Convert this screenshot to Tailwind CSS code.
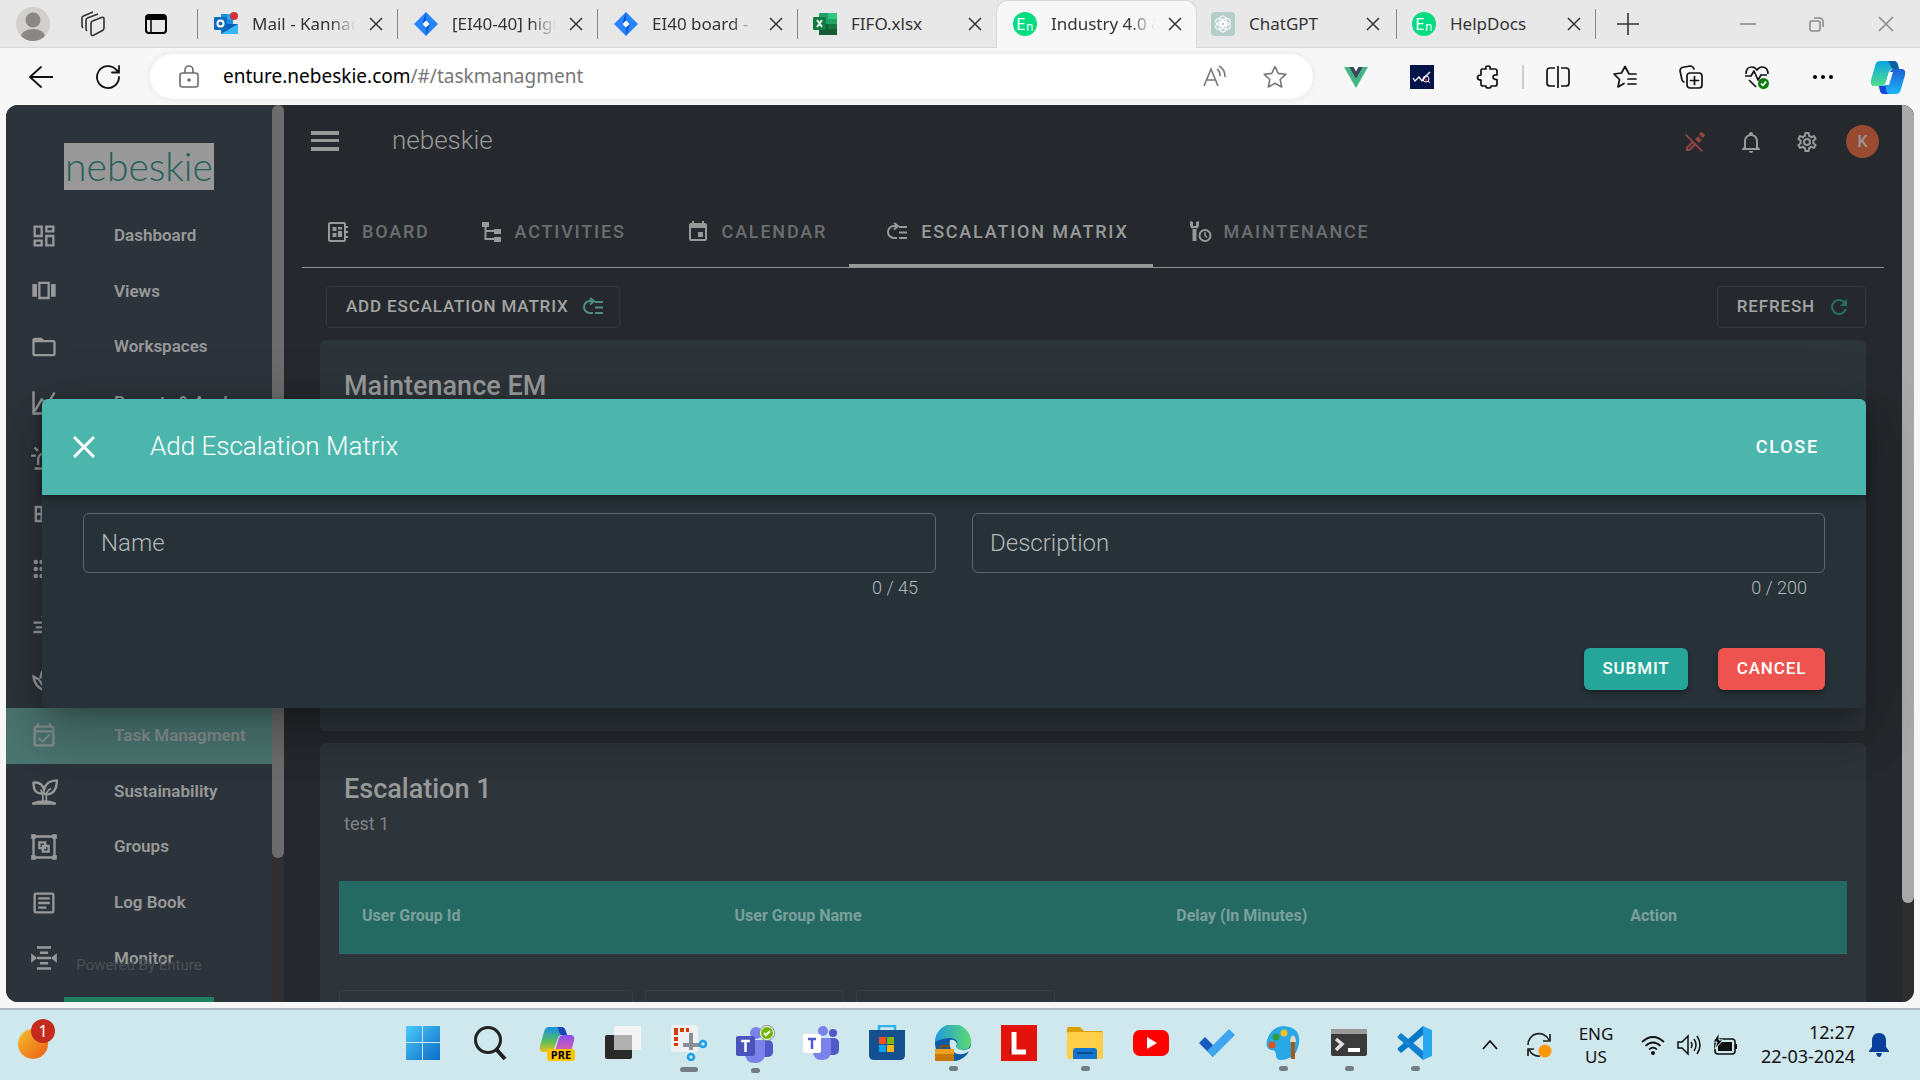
<!DOCTYPE html>
<html lang="en">
<head>
  <meta charset="UTF-8">
  <title>Industry 4.0 - Task Managment</title>
  <script src="https://cdn.jsdelivr.net/npm/@tailwindcss/browser@4"></script>
</head>
<body class="h-screen flex flex-col overflow-hidden bg-[#f7f7f7] font-['Noto_Sans',sans-serif] text-[#333]">

  <!-- Browser tabs -->
  <div class="h-12 shrink-0 flex items-center bg-[#e8e8e8] border-b border-[#d8d8d8] text-[17px]">
    <button class="w-[66px] flex justify-center" aria-label="Profile">
      <svg class="size-[34px]" viewBox="0 0 34 34"><defs><clipPath id="av"><circle cx="17" cy="17" r="17"/></clipPath></defs><circle cx="17" cy="17" r="17" fill="#d2d0cd"/><g clip-path="url(#av)" fill="#8a8785"><circle cx="17" cy="13" r="7.5"/><ellipse cx="17" cy="30" rx="12" ry="8"/></g></svg>
    </button>
    <button class="w-[54px] flex justify-center" aria-label="Workspaces">
      <svg class="size-[26px]" viewBox="0 0 26 26" fill="none" stroke="#333" stroke-width="1.6" stroke-linejoin="round"><path d="M12.500 10l9-3.500q2.500-.8 2.500 1.500v9q0 1.500-1.500 2.500l-8.500 4.500q-3 1.500-3-1.500V12q0-1.500 1.500-2zM7 20q-1-1-1-2V9q0-1.500 1.500-2L18 3M3 17q-1-1-1-2V7q0-1.500 1.500-2L13 1"/></svg>
    </button>
    <button class="w-[77px] pr-1.5 flex justify-center" aria-label="Tab actions">
      <svg class="size-6" viewBox="0 0 24 24" fill="none" stroke="#000" stroke-width="2"><rect x="2" y="3" width="20" height="18" rx="3"/><path d="M2 5.500h20" stroke-width="5"/><path d="M7 8v13" stroke-width="1.500"/></svg>
    </button>

    <div class="flex h-12 items-center">
      <div class="w-[200px] h-[30px] pl-4 flex items-center border-l border-[#888]">
        <svg class="size-6 shrink-0" viewBox="0 0 24 24"><path d="M7 2h12v20H7z" fill="#1490df"/><path d="M13 2h6v6h-6z" fill="#28a8ea"/><path d="M7 12h17v10H8z" fill="#0a5fb4"/><path d="M24 12v10H7z" fill="#35b8f1"/><rect y="5" width="13" height="13" rx="1" fill="#0f6cbd"/><circle cx="6.500" cy="11.500" r="3" fill="none" stroke="#fff" stroke-width="2"/><circle cx="20" cy="4" r="4" fill="#d13438"/></svg>
        <span class="ml-3.5 w-[104px] overflow-hidden whitespace-nowrap mask-r-from-75%">Mail - Kannadasan</span>
        <button class="ml-3" aria-label="Close tab"><svg class="size-4" viewBox="0 0 16 16" stroke="#333" stroke-width="1.500"><path d="M2 2l12 12M14 2L2 14"/></svg></button>
      </div>
      <div class="w-[200px] h-[30px] pl-4 flex items-center border-l border-[#888]">
        <svg class="size-6 shrink-0" viewBox="0 0 24 24"><path d="M12 0l12 12-12 12L0 12z" fill="#2684ff"/><path d="M12 0v9L8 13zM12 24v-9l4-4z" fill="#0a52cc"/><path d="M12 8.500l3.500 3.500-3.500 3.500L8.500 12z" fill="#fff"/></svg>
        <span class="ml-3.5 w-[104px] overflow-hidden whitespace-nowrap mask-r-from-75%">[EI40-40] highlight</span>
        <button class="ml-3" aria-label="Close tab"><svg class="size-4" viewBox="0 0 16 16" stroke="#333" stroke-width="1.500"><path d="M2 2l12 12M14 2L2 14"/></svg></button>
      </div>
      <div class="w-[200px] h-[30px] pl-4 flex items-center border-l border-[#888]">
        <svg class="size-6 shrink-0" viewBox="0 0 24 24"><path d="M12 0l12 12-12 12L0 12z" fill="#2684ff"/><path d="M12 0v9L8 13zM12 24v-9l4-4z" fill="#0a52cc"/><path d="M12 8.500l3.500 3.500-3.500 3.500L8.500 12z" fill="#fff"/></svg>
        <span class="ml-3.5 w-[104px] overflow-hidden whitespace-nowrap mask-r-from-75%">EI40 board - </span>
        <button class="ml-3" aria-label="Close tab"><svg class="size-4" viewBox="0 0 16 16" stroke="#333" stroke-width="1.500"><path d="M2 2l12 12M14 2L2 14"/></svg></button>
      </div>
      <div class="w-[199px] h-[30px] pl-[15px] flex items-center border-l border-[#888]">
        <svg class="size-6 shrink-0" viewBox="0 0 24 24"><rect x="6" y="1" width="18" height="22" rx="1" fill="#21a366"/><path d="M15 1h9v6h-9z" fill="#33c481"/><path d="M6 12h9v6H6z" fill="#185c37"/><path d="M15 12h9v5h-9z" fill="#107c41"/><path d="M6 17h18v6H6z" fill="#185c37"/><rect y="5" width="13" height="13" rx="1" fill="#107c41"/><path d="M4 8l5 7M9 8l-5 7" stroke="#fff" stroke-width="1.800"/></svg>
        <span class="ml-3.5 w-[104px] overflow-hidden whitespace-nowrap">FIFO.xlsx</span>
        <button class="ml-3" aria-label="Close tab"><svg class="size-4" viewBox="0 0 16 16" stroke="#333" stroke-width="1.500"><path d="M2 2l12 12M14 2L2 14"/></svg></button>
      </div>
      <div class="w-[201px] h-12 pl-4 flex items-center rounded-t-xl bg-[#f7f7f7] border-x border-t border-[#d8d8d8]">
        <svg class="size-6 shrink-0" viewBox="0 0 24 24"><circle cx="12" cy="12" r="12" fill="#00dc82"/><text x="3" y="18" font-size="17" fill="#fff" font-family="Noto Sans">E</text><text x="13" y="19" font-size="12" fill="#fff" font-family="Noto Sans">n</text></svg>
        <span class="ml-3.5 w-[104px] overflow-hidden whitespace-nowrap mask-r-from-75%">Industry 4.0 &amp; IoT</span>
        <button class="ml-3" aria-label="Close tab"><svg class="size-4" viewBox="0 0 16 16" stroke="#333" stroke-width="1.500"><path d="M2 2l12 12M14 2L2 14"/></svg></button>
      </div>
      <div class="w-[199px] h-[30px] pl-[14px] flex items-center">
        <svg class="size-6 shrink-0" viewBox="0 0 24 24"><rect width="24" height="24" rx="4" fill="#b4cfc8"/><g fill="none" stroke="#fff" stroke-width="1.200"><ellipse cx="12" cy="9" rx="3.500" ry="5"/><ellipse cx="12" cy="9" rx="3.500" ry="5" transform="rotate(60 12 12)"/><ellipse cx="12" cy="9" rx="3.500" ry="5" transform="rotate(120 12 12)"/><ellipse cx="12" cy="9" rx="3.500" ry="5" transform="rotate(180 12 12)"/><ellipse cx="12" cy="9" rx="3.500" ry="5" transform="rotate(240 12 12)"/><ellipse cx="12" cy="9" rx="3.500" ry="5" transform="rotate(300 12 12)"/></g></svg>
        <span class="ml-3.5 w-[104px] overflow-hidden whitespace-nowrap">ChatGPT</span>
        <button class="ml-3" aria-label="Close tab"><svg class="size-4" viewBox="0 0 16 16" stroke="#333" stroke-width="1.500"><path d="M2 2l12 12M14 2L2 14"/></svg></button>
      </div>
      <div class="w-[200px] h-[30px] pl-[15px] flex items-center border-x border-[#888]">
        <svg class="size-6 shrink-0" viewBox="0 0 24 24"><circle cx="12" cy="12" r="12" fill="#00dc82"/><text x="3" y="18" font-size="17" fill="#fff" font-family="Noto Sans">E</text><text x="13" y="19" font-size="12" fill="#fff" font-family="Noto Sans">n</text></svg>
        <span class="ml-3.5 w-[104px] overflow-hidden whitespace-nowrap">HelpDocs</span>
        <button class="ml-3" aria-label="Close tab"><svg class="size-4" viewBox="0 0 16 16" stroke="#333" stroke-width="1.500"><path d="M2 2l12 12M14 2L2 14"/></svg></button>
      </div>
    </div>
    <button class="ml-[21px]" aria-label="New tab"><svg class="size-[22px]" viewBox="0 0 22 22" stroke="#333" stroke-width="1.600"><path d="M11 0v22M0 11h22"/></svg></button>
    <div class="ml-auto mr-[26px] flex items-center gap-[53px]">
      <button aria-label="Minimise"><svg class="size-4" viewBox="0 0 16 16" stroke="#8a8a8a" stroke-width="1.600"><path d="M0 8h16"/></svg></button>
      <button aria-label="Restore"><svg class="size-4" viewBox="0 0 16 16" fill="none" stroke="#8a8a8a" stroke-width="1.600"><rect x="1" y="5" width="10" height="10" rx="2"/><path d="M5 2h5q4 0 4 4v5"/></svg></button>
      <button aria-label="Close window"><svg class="size-4" viewBox="0 0 16 16" stroke="#8a8a8a" stroke-width="1.600"><path d="M1 1l14 14M15 1L1 15"/></svg></button>
    </div>
  </div>

  <!-- Address bar -->
  <div class="h-[57px] shrink-0 flex items-center">
    <button class="ml-2 w-[66px] flex justify-center" aria-label="Back"><svg class="size-6" viewBox="0 0 24 24" fill="none" stroke="#111" stroke-width="1.800" stroke-linecap="round" stroke-linejoin="round"><path d="M24 12H1M12 2L1 12l11 10"/></svg></button>
    <button class="w-[67px] flex justify-center" aria-label="Reload"><svg class="size-[26px]" viewBox="0 0 26 26" fill="none" stroke="#111" stroke-width="1.800" stroke-linecap="round"><path d="M24 13A11 11 0 1 1 21 5.500l2.500 2.500M24 2v6.500h-7"/></svg></button>
    <div class="ml-[9px] mr-2.5 h-[45px] flex-1 flex items-center rounded-full bg-white shadow-[0_0_6px_rgba(0,0,0,0.08)]">
      <svg class="ml-[29px] h-6 w-5 shrink-0" viewBox="0 0 20 24" fill="none" stroke="#6b6b6b" stroke-width="1.600"><rect x="1" y="8" width="18" height="14" rx="2.500"/><path d="M6 8V5a4 4 0 0 1 8 0v3"/><circle cx="10" cy="15" r="1" fill="#6b6b6b"/></svg>
      <a href="#" class="ml-6 text-[19px] text-[#777]"><span class="text-black">enture.nebeskie.com</span>/#/taskmanagment</a>
      <svg class="ml-auto size-6" viewBox="0 0 24 24" fill="none" stroke="#777" stroke-width="1.600"><path d="M1 21L8 4l7 17M3.500 15h9M14 4q3 2 3 7M16 1q6 3 6 11"/></svg>
      <svg class="ml-9 mr-[26px] size-6" viewBox="0 0 24 24" fill="none" stroke="#777" stroke-width="1.600" stroke-linejoin="round"><path d="M12 1.500l3.200 6.900 7.600.9-5.600 5.200 1.500 7.500L12 18.300 5.300 22l1.500-7.500L1.200 9.300l7.600-.9z"/></svg>
    </div>
    <button class="w-[66px] flex justify-center" aria-label="Vue devtools"><svg class="size-6" viewBox="0 0 24 24"><path d="M0 2h5l7 12 7-12h5L12 23z" fill="#41b883"/><path d="M5 2h4.500L12 6.500 14.500 2H19l-7 12z" fill="#34495e"/></svg></button>
    <button class="w-[66px] flex justify-center" aria-label="Analytics extension"><svg class="size-6" viewBox="0 0 24 24"><path d="M0 0h24v24H0z" fill="#04134a"/><path d="M3 13l2 3 4-4 3 4 4-5 4-4" fill="none" stroke="#fff" stroke-width="1.300"/><circle cx="16" cy="14" r="3" fill="none" stroke="#fff"/><path d="M18 16l2 2" stroke="#fff"/><circle cx="16" cy="15" r="1" fill="#e33"/></svg></button>
    <button class="w-[66px] flex justify-center" aria-label="Extensions"><svg class="size-6" viewBox="0 0 24 24" fill="none" stroke="#111" stroke-width="1.700" stroke-linejoin="round"><path d="M6 4h4q-1-3 2-3t2 3h5q2 0 2 2v4q-4-.5-4 2t4 2.500V19q0 2-2 2h-4q.5 2-2.500 2T10 21H7q-2 0-2-2v-4q-3.500 0-3.500-2.500T5 10V6q0-2 1-2z"/></svg></button>
    <span class="mx-px h-6 w-0.5 bg-[#ccc]"></span>
    <button class="w-[66px] flex justify-center" aria-label="Split screen"><svg class="size-6" viewBox="0 0 24 24" fill="none" stroke="#111" stroke-width="1.700"><path d="M12 1v22M9 3H4Q1 3 1 6v12q0 3 3 3h5M15 3h5q3 0 3 3v12q0 3-3 3h-5"/></svg></button>
    <button class="w-[67px] flex justify-center" aria-label="Favorites"><svg class="size-6" viewBox="0 0 24 24" fill="none" stroke="#111" stroke-width="1.700" stroke-linejoin="round" stroke-linecap="round"><path d="M22 9h-6L12 1.500 8.500 8 1 9l5.500 5.500L5 22l6-3.500M15 14h8M15 19h8M19 9h4"/></svg></button>
    <button class="w-[66px] flex justify-center" aria-label="Collections"><svg class="size-6" viewBox="0 0 24 24" fill="none" stroke="#111" stroke-width="1.700" stroke-linecap="round"><rect x="8" y="8" width="15" height="15" rx="3"/><path d="M15.500 11.500v8M11.500 15.500h8M5 17q-1.500-.5-2-2L1 6q0-2.500 2-3.500l8-1.500q3 0 4 3"/></svg></button>
    <button class="w-[66px] flex justify-center" aria-label="Browser essentials"><svg class="size-6" viewBox="0 0 24 24" fill="none" stroke="#111" stroke-width="1.700" stroke-linejoin="round"><path d="M1 9Q1 2 7 2q3 0 5 3 2-3 5-3 6 0 6 7M0 11h6l3-5 4 9 3-5h6M4 15l7 7"/><circle cx="18.500" cy="18.500" r="5.500" fill="#107c10" stroke="none"/><path d="M16 18.500l2 2 3-4" stroke="#fff"/></svg></button>
    <button class="w-[66px] flex justify-center" aria-label="Settings and more"><svg class="size-5" viewBox="0 0 20 20"><circle cx="2" cy="10" r="2"/><circle cx="10" cy="10" r="2"/><circle cx="18" cy="10" r="2"/></svg></button>
    <button class="w-16 flex justify-center" aria-label="Copilot">
      <svg class="size-9" viewBox="0 0 36 36"><defs><linearGradient id="cpa" x1="0" y1="0" x2="0" y2="1"><stop offset="0" stop-color="#0aa4e8"/><stop offset="1" stop-color="#4fe08a"/></linearGradient><linearGradient id="cpb" x1="0" y1="0" x2="0" y2="1"><stop offset="0" stop-color="#1f5fd0"/><stop offset="1" stop-color="#1ab8f8"/></linearGradient></defs><path d="M10 2h14q3 0 4 4l1 4h-6q-3 0-4 3l-3 10q-1 4-5 4H4q-4 0-3-6l4-14q1-5 5-5z" fill="url(#cpa)"/><path d="M17 2h7q3 0 4 4l1 4h-6q-2-1-3-4-1-4-3-4z" fill="#0b62a0"/><path d="M26 35H14q-3 0-4-3l-1-5h3q4 0 5-4l3-10q1-3 4-3h8q4 0 3 6l-4 14q-1 5-5 5z" fill="url(#cpb)"/><path d="M9 27h4q3-1 3 3t3 5h-5q-3 0-4-3z" fill="#1546d8"/><path d="M19 13h4l-4 13h-4z" fill="#f4faff"/></svg>
    </button>
  </div>

  <!-- App -->
  <div class="relative mx-1.5 mb-1.5 flex-1 min-h-0 flex overflow-hidden rounded-xl bg-[#25292d] font-[Roboto,sans-serif] text-[#989999]">

    <!-- Sidebar -->
    <aside class="relative w-[266px] shrink-0 flex flex-col bg-[#2c333a]">
      <div class="mt-[38px] mx-[58px] h-[47px] flex items-center justify-center bg-[#999] font-[Lato,sans-serif] font-light text-[39px] leading-none text-[#265f59]">nebeskie</div>
      <nav class="mt-[18px] mb-4 flex-1 min-h-0 flex flex-col text-[17px] font-semibold">
        <a href="#" class="flex-1 flex items-center pl-6"><svg class="size-7 fill-current" viewBox="0 0 24 24"><path d="M19,5V7H15V5H19M9,5V11H5V5H9M19,13V19H15V13H19M9,17V19H5V17H9M21,3H13V9H21V3M11,3H3V13H11V3M21,11H13V21H21V11M11,15H3V21H11V15Z"/></svg><span class="ml-14">Dashboard</span></a>
        <a href="#" class="flex-1 flex items-center pl-6"><svg class="size-7 fill-current" viewBox="0 0 24 24"><path fill-rule="evenodd" d="M18 6h4v11h-4zM2 6h4v11H2zM7 4h10v15H7zM9 6v11h6V6z"/></svg><span class="ml-14">Views</span></a>
        <a href="#" class="flex-1 flex items-center pl-6"><svg class="size-7 fill-current" viewBox="0 0 24 24"><path d="M20,18H4V8H20M20,6H12L10,4H4C2.890,4 2,4.890 2,6V18A2,2 0 0,0 4,20H20A2,2 0 0,0 22,18V8C22,6.890 21.100,6 20,6Z"/></svg><span class="ml-14">Workspaces</span></a>
        <a href="#" class="flex-1 flex items-center pl-6"><svg class="size-7" viewBox="0 0 24 24" fill="none" stroke="currentColor" stroke-width="2"><path d="M3 2v19h19M4 19L10 9l5 4 6-10"/></svg><span class="ml-14">Reports &amp; Anal...</span></a>
        <a href="#" class="flex-1 flex items-center pl-6"><svg class="size-7" viewBox="0 0 24 24" fill="none" stroke="currentColor" stroke-width="2"><path d="M7 18v-5a5 5 0 0 1 10 0v5M4 21h16M1 10h4M4 3l3 3M12 2v3M20 3l-3 3"/></svg></a>
        <a href="#" class="flex-1 flex items-center pl-6"><svg class="size-7" viewBox="0 0 24 24" fill="none" stroke="currentColor" stroke-width="2"><path d="M5 6h15v12H5zM5 12h15M10 6v12"/></svg></a>
        <a href="#" class="flex-1 flex items-center pl-6"><svg class="size-7 fill-current" viewBox="0 0 24 24"><circle cx="5" cy="6" r="2"/><circle cx="5" cy="12" r="2"/><circle cx="5" cy="18" r="2"/><circle cx="10" cy="6" r="2"/><circle cx="10" cy="12" r="2"/><circle cx="10" cy="18" r="2"/></svg></a>
        <a href="#" class="flex-1 flex items-center pl-6"><svg class="size-7" viewBox="0 0 24 24" fill="none" stroke="currentColor" stroke-width="2"><path d="M3 10h14M5 14h16M3 18h18M10 5h8"/></svg></a>
        <a href="#" class="flex-1 flex items-center pl-6"><svg class="size-7" viewBox="0 0 24 24" fill="none" stroke="currentColor" stroke-width="2"><path d="M3 9c1 7 4 10 9 12-1-7-4-10-9-12zM21 9c-1 7-4 10-9 12 1-7 4-10 9-12zM9 11q0-5 3-8 3 3 3 8"/></svg></a>
        <a href="#" class="flex-1 flex items-center pl-6 bg-[#4b7570] text-[#85908e]"><svg class="size-7 fill-current" viewBox="0 0 24 24"><path d="M19 3H18V1H16V3H8V1H6V3H5C3.900 3 3 3.900 3 5V19C3 20.100 3.900 21 5 21H19C20.100 21 21 20.100 21 19V5C21 3.900 20.100 3 19 3M19 19H5V9H19V19M19 7H5V5H19V7M10.560 18L17.500 11.090L16.430 10.030L10.560 15.900L7.970 13.310L6.910 14.370L10.560 18Z"/></svg><span class="ml-14">Task Managment</span></a>
        <a href="#" class="flex-1 flex items-center pl-6"><svg class="size-7" viewBox="0 0 24 24" fill="none" stroke="currentColor" stroke-width="2"><path d="M2 22q10-4 20 0z" fill="currentColor"/><path d="M11 20v-5q0-3-2-5M14 20v-5q0-4 4-6" stroke-width="1.500"/><path d="M3 4q7-1 9 6Q14 2 23 2q0 12-9 12-1 0-2-1Q3 15 3 4z"/></svg><span class="ml-14">Sustainability</span></a>
        <a href="#" class="flex-1 flex items-center pl-6"><svg class="size-7" viewBox="0 0 24 24" fill="none" stroke="currentColor" stroke-width="2"><path d="M3 3h18v18H3zM8 8h5v5H8zM11 11h5v5h-5z"/><path d="M1 1h4v4H1zM19 1h4v4h-4zM1 19h4v4H1zM19 19h4v4h-4z" fill="currentColor" stroke="none"/></svg><span class="ml-14">Groups</span></a>
        <a href="#" class="flex-1 flex items-center pl-6"><svg class="size-7" viewBox="0 0 24 24" fill="none" stroke="currentColor" stroke-width="2"><rect x="4" y="4" width="16" height="16" rx="1"/><path d="M7 8h10M7 12h10M7 16h7"/></svg><span class="ml-14">Log Book</span></a>
        <a href="#" class="flex-1 flex items-center pl-6"><svg class="size-7" viewBox="0 0 24 24" fill="none" stroke="currentColor" stroke-width="2"><path d="M6 3h12M8.500 7.500h7M6 12h12M8.500 16.500h7M6 21h12"/><path d="M1 8l5 4-5 4zM23 8l-5 4 5 4z" fill="currentColor" stroke="none"/></svg><span class="ml-14">Monitor</span></a>
      </nav>
      <div class="absolute bottom-0 left-[58px] w-[150px] pointer-events-none">
        <p class="mb-[21px] text-center text-[15px] leading-[22px] text-[#4b5054]">Powered By Enture</p>
        <div class="h-[5px] bg-[#20805f]"></div>
      </div>
    </aside>
    <div class="w-3 shrink-0 bg-[#302e2e]"><div class="h-[84%] rounded-full bg-[#6c6c6c]"></div></div>

    <!-- Main -->
    <main class="flex-1 min-w-0 flex flex-col">
      <header class="h-[75px] shrink-0 flex items-center pl-[27px] pr-[23px]">
        <button class="mb-1" aria-label="Menu"><svg class="w-7 h-5" viewBox="0 0 28 20" fill="#989999"><path d="M0 0h28v4H0zM0 8h28v3H0zM0 16h28v4H0z"/></svg></button>
        <h1 class="ml-[53px] mb-1 text-[26px] font-light">nebeskie</h1>
        <div class="ml-auto mb-0.5 flex items-center">
          <svg class="size-6 fill-[#8e4544]" viewBox="0 0 24 24"><path d="M18.660 2q-.360 0-.720.290l-2.030 2.030 3.750 3.750 2.050-2.030q.600-.700 0-1.410l-2.340-2.340Q19 2 18.660 2M3.280 4L2 5.280l6.500 6.470L3 17.250V21h3.750l5.500-5.500L18.720 22 20 20.720zM15.060 6.190l-3 3 3.750 3.750 3-3zM9.910 13.160l.930.930L5.920 19H5v-.920z"/></svg>
          <svg class="ml-8 size-6 fill-current" viewBox="0 0 24 24"><path d="M10 21H14C14 22.100 13.100 23 12 23S10 22.100 10 21M21 19V20H3V19L5 17V11C5 7.900 7 5.200 10 4.300V4C10 2.900 10.900 2 12 2S14 2.900 14 4V4.300C17 5.200 19 7.900 19 11V17L21 19M17 11C17 8.200 14.800 6 12 6S7 8.200 7 11V18H17V11Z"/></svg>
          <svg class="ml-8 size-6 fill-current" viewBox="0 0 24 24"><path d="M12,8A4,4 0 0,1 16,12A4,4 0 0,1 12,16A4,4 0 0,1 8,12A4,4 0 0,1 12,8M12,10A2,2 0 0,0 10,12A2,2 0 0,0 12,14A2,2 0 0,0 14,12A2,2 0 0,0 12,10M10,22C9.750,22 9.540,21.820 9.500,21.580L9.130,18.930C8.500,18.680 7.960,18.340 7.440,17.940L4.950,18.950C4.730,19.030 4.460,18.950 4.340,18.730L2.340,15.270C2.210,15.050 2.270,14.780 2.460,14.630L4.570,12.970L4.500,12L4.570,11L2.460,9.370C2.270,9.220 2.210,8.950 2.340,8.730L4.340,5.270C4.460,5.050 4.730,4.960 4.950,5.050L7.440,6.050C7.960,5.660 8.500,5.320 9.130,5.070L9.500,2.420C9.540,2.180 9.750,2 10,2H14C14.250,2 14.460,2.180 14.500,2.420L14.870,5.070C15.500,5.320 16.040,5.660 16.560,6.050L19.050,5.050C19.270,4.960 19.540,5.050 19.660,5.270L21.660,8.730C21.790,8.950 21.730,9.220 21.540,9.370L19.430,11L19.500,12L19.430,13L21.540,14.630C21.730,14.780 21.790,15.050 21.660,15.270L19.660,18.730C19.540,18.950 19.270,19.040 19.050,18.950L16.560,17.950C16.040,18.340 15.500,18.680 14.870,18.930L14.500,21.580C14.460,21.820 14.250,22 14,22H10M11.250,4L10.880,6.610C9.680,6.860 8.620,7.500 7.850,8.390L5.440,7.350L4.690,8.650L6.800,10.200C6.400,11.370 6.400,12.640 6.800,13.800L4.680,15.360L5.430,16.660L7.860,15.620C8.630,16.500 9.680,17.140 10.870,17.380L11.240,20H12.760L13.130,17.390C14.320,17.140 15.370,16.500 16.140,15.620L18.570,16.660L19.320,15.360L17.200,13.810C17.600,12.640 17.600,11.370 17.200,10.200L19.310,8.650L18.560,7.350L16.150,8.390C15.380,7.500 14.320,6.860 13.120,6.620L12.750,4H11.250Z"/></svg>
          <span class="ml-[27px] size-[33px] flex items-center justify-center rounded-full bg-[#994a30] text-base font-medium">K</span>
        </div>
      </header>

      <!-- Tabs -->
      <div class="mx-[18px] h-[88px] shrink-0 flex border-b border-[#8f9090] text-lg font-medium tracking-widest text-[#6b6e70]">
        <button class="flex items-center pt-4 pl-[24px]"><svg class="mr-3 size-6 text-[#989999]" viewBox="0 0 24 24" fill="none" stroke="currentColor" stroke-width="2"><rect x="3" y="3" width="16" height="18" rx="1"/><path d="M19 7h3M19 12h3M19 17h3"/><path d="M6.500 7h4v4h-4zM12 7h4v2.500h-4zM12 11h4v6h-4zM6.500 13h4v4h-4z" fill="currentColor" stroke="none"/></svg>BOARD</button>
        <button class="flex items-center pt-4 ml-[50px]"><svg class="mr-[11px] size-6 fill-[#989999]" viewBox="0 0 24 24"><path d="M2 2h7v5H6.500v3H14v2H6.500v6H14v2H4.500V7H2zM14 9h7v5h-7zM14 17h7v5h-7z"/></svg>ACTIVITIES</button>
        <button class="flex items-center pt-4 ml-[60px]"><svg class="mr-3 size-6 fill-[#989999]" viewBox="0 0 24 24"><path d="M19,19H5V8H19M16,1V3H8V1H6V3H5C3.890,3 3,3.890 3,5V19A2,2 0 0,0 5,21H19A2,2 0 0,0 21,19V5C21,3.890 20.100,3 19,3H18V1M17,12H12V17H17V12Z"/></svg>CALENDAR</button>
        <button class="flex items-center pt-[19px] ml-[22px] pl-9 pr-6 border-b-[3px] border-[#989999] text-[#989999]"><svg class="mr-3 size-6" viewBox="0 0 24 24" fill="none" stroke="currentColor" stroke-width="2"><path d="M13 6H9a6 6 0 0 0 0 12h3M9 3l4 3-4 3.500M14 7h8M14 12.500h8M14 18h8"/></svg>ESCALATION MATRIX</button>
        <button class="flex items-center pt-4 ml-[35px]"><svg class="mr-3 size-6 text-[#989999]" viewBox="0 0 24 24" fill="none" stroke="currentColor" stroke-width="2"><path d="M4.500 8h4v13h-4zM2 1v4q0 4 4.500 4T11 5V1L8 2v4H5V2z" fill="currentColor" stroke="none"/><circle cx="17" cy="15.500" r="5.500"/><path d="M17 12v3.500l2 2" stroke-width="1.500"/></svg>MAINTENANCE</button>
      </div>

      <div class="mt-[18px] ml-[42px] mr-9 shrink-0 flex justify-between text-[17px] font-medium tracking-wider text-[#a3a4a4]">
        <button class="h-[42px] pl-[19px] pr-3.5 flex items-center rounded border border-[#343a3e]">ADD ESCALATION MATRIX<svg class="ml-3 size-6 text-[#4f8f83]" viewBox="0 0 24 24" fill="none" stroke="currentColor" stroke-width="2"><path d="M13 6H9a6 6 0 0 0 0 12h3M9 3l4 3-4 3.500M14 7h8M14 12.500h8M14 18h8"/></svg></button>
        <button class="h-[42px] pl-[19px] pr-3.5 flex items-center rounded border border-[#343a3e]">REFRESH<svg class="ml-3 size-6 fill-[#246f66]" viewBox="0 0 24 24"><path d="M17.650,6.350C16.200,4.900 14.210,4 12,4A8,8 0 0,0 4,12A8,8 0 0,0 12,20C15.730,20 18.840,17.450 19.730,14H17.650C16.830,16.330 14.610,18 12,18A6,6 0 0,1 6,12A6,6 0 0,1 12,6C13.660,6 15.140,6.690 16.220,7.780L13,11H20V4L17.650,6.350Z"/></svg></button>
      </div>

      <section class="mt-3 mx-9 h-[391px] shrink-0 rounded-md bg-[#2d343a] px-6 pt-[30px]">
        <h2 class="text-[27px] leading-8 font-medium">Maintenance EM</h2>
      </section>

      <section class="mt-3 mx-9 flex-1 min-h-0 overflow-hidden rounded-t-md bg-[#2d343a] px-[19px] pt-[30px]">
        <h2 class="ml-[5px] text-[27px] leading-8 font-medium">Escalation 1</h2>
        <p class="ml-[5px] mt-[7px] text-[18px] leading-6 text-[#7f8284]">test 1</p>
        <table class="mt-[45px] w-full table-fixed bg-[#246a62] text-left text-base text-[#7ba09b]">
          <thead>
            <tr class="h-[72px] border-b border-[#2c7068]">
              <th class="w-[24.7%] pl-[23px] pb-0.5 font-bold">User Group Id</th>
              <th class="w-[29.3%] pl-[23px] pb-0.5 font-bold">User Group Name</th>
              <th class="w-[30.1%] pl-[23px] pb-0.5 font-bold">Delay (In Minutes)</th>
              <th class="pl-[23px] pb-0.5 font-bold">Action</th>
            </tr>
          </thead>
        </table>
        <div class="mt-9 flex gap-3">
          <button class="w-[294px] h-[42px] rounded border border-[#383f44]" aria-label="Edit"></button>
          <button class="w-[199px] h-[42px] rounded border border-[#383f44]" aria-label="View"></button>
          <button class="w-[199px] h-[42px] rounded border border-[#383f44]" aria-label="Delete"></button>
        </div>
      </section>
    </main>
    <div class="w-3 shrink-0 bg-[#2f2c2c]"><div class="h-[89%] rounded-b-full bg-[#a9a9ab]"></div></div>

    <!-- Add Escalation Matrix dialog -->
    <div role="dialog" class="absolute top-[294px] left-9 right-12 rounded-md bg-[#263238] text-[#b4b8ba] shadow-[0_14px_19px_-9px_rgba(0,0,0,0.2),0_30px_48px_4px_rgba(0,0,0,0.14),0_11px_58px_10px_rgba(0,0,0,0.12)]">
      <div class="h-24 flex items-center rounded-t-md bg-[#4db6ac] text-white shadow-[0_3px_8px_rgba(0,0,0,0.4)]">
        <button class="ml-[31px]" aria-label="Close dialog"><svg class="size-[22px]" viewBox="0 0 22 22" stroke="#fff" stroke-width="3"><path d="M1 1l20 20M21 1L1 21"/></svg></button>
        <h2 class="ml-[55px] mb-0.5 text-[26px] font-light">Add Escalation Matrix</h2>
        <button class="ml-auto mr-[47px] text-lg font-medium tracking-widest">CLOSE</button>
      </div>
      <form class="px-[41px] pt-[18px] pb-[18px]">
        <div class="grid grid-cols-2 gap-9">
          <div>
            <label for="name" class="sr-only">Name</label>
            <input id="name" placeholder="Name" maxlength="45" class="w-full h-[60px] px-[17px] rounded-md border border-[#5d666b] text-2xl font-light placeholder:text-[#b4b8ba]">
            <p class="mt-[3px] mr-[18px] text-right text-[18px] leading-6 font-light">0 / 45</p>
          </div>
          <div>
            <label for="description" class="sr-only">Description</label>
            <input id="description" placeholder="Description" maxlength="200" class="w-full h-[60px] px-[17px] rounded-md border border-[#5d666b] text-2xl font-light placeholder:text-[#b4b8ba]">
            <p class="mt-[3px] mr-[18px] text-right text-[18px] leading-6 font-light">0 / 200</p>
          </div>
        </div>
        <div class="mt-12 flex justify-end gap-[30px] text-[17px] font-medium tracking-wider text-white">
          <button type="button" class="w-[104px] h-[42px] rounded-md bg-[#26a69a] shadow-md shadow-black/30">SUBMIT</button>
          <button type="button" class="w-[107px] h-[42px] rounded-md bg-[#ef5350] shadow-md shadow-black/30">CANCEL</button>
        </div>
      </form>
    </div>
  </div>

  <!-- Taskbar -->
  <footer class="relative h-[72px] shrink-0 flex items-center bg-[#cfe8ee] border-t-2 border-[#a9b9bf] text-[#111]">
    <button class="ml-4" aria-label="Widgets">
      <svg class="w-10 h-12 mb-3" viewBox="0 0 40 48"><defs><linearGradient id="sun" x1="0" y1="0" x2="1" y2="1"><stop offset="0" stop-color="#f2c230"/><stop offset="1" stop-color="#f05a10"/></linearGradient></defs><circle cx="17" cy="29" r="15" fill="url(#sun)"/><circle cx="27" cy="16" r="12" fill="#c42b1c"/><text x="27" y="22" text-anchor="middle" font-size="16" fill="#fff" font-family="Noto Sans">1</text></svg>
    </button>
    <div class="ml-[334px] flex">
      <button class="w-[66px] flex justify-center" aria-label="Start"><svg class="size-9" viewBox="0 0 36 36"><defs><linearGradient id="win" x1="0" y1="0" x2="1" y2="1"><stop offset="0" stop-color="#4cc8f8"/><stop offset="1" stop-color="#0a6cc8"/></linearGradient></defs><path d="M1 1h16v16H1zM18 1h17v16H18zM1 18h16v17H1zM18 18h17v17H18z" fill="url(#win)"/></svg></button>
      <button class="w-[68px] flex justify-center" aria-label="Search"><svg class="size-9" viewBox="0 0 36 36" fill="none" stroke="#222" stroke-width="3"><circle cx="16" cy="15" r="12.500"/><path d="M24 24l9 10" stroke-width="4"/></svg></button>
      <button class="w-[66px] flex justify-center" aria-label="Copilot"><svg class="size-9" viewBox="0 0 36 36"><defs><linearGradient id="pra" x1="0" y1="0" x2="0" y2="1"><stop offset="0" stop-color="#1490e8"/><stop offset=".6" stop-color="#5cbf5a"/><stop offset="1" stop-color="#f4c020"/></linearGradient><linearGradient id="prb" x1="0" y1="0" x2="0" y2="1"><stop offset="0" stop-color="#8a50f0"/><stop offset="1" stop-color="#f06090"/></linearGradient></defs><path d="M10 2h12q4 0 5 5l1 3h-5q-3 0-4 3l-4 11q-1 3-5 3H4q-4 0-3-6L5 7q1-5 5-5z" fill="url(#pra)"/><path d="M18 2h4q4 0 5 5l1 3h-5q-3-1-3-4t-2-4z" fill="#1a44b8"/><path d="M24 10h8q4 0 3 6l-4 14H15l4-14q1-6 5-6z" fill="url(#prb)"/><rect x="8" y="24" width="28" height="12" rx="3" fill="#ffc400"/><text x="22" y="34" text-anchor="middle" font-size="11" font-weight="bold" font-family="Open Sans">PRE</text></svg></button>
      <button class="w-[66px] flex justify-center" aria-label="Task view"><svg class="size-9" viewBox="0 0 36 36"><rect y="10" width="27" height="24" rx="2" fill="#2a2a2a"/><rect x="9" y="1" width="27" height="24" rx="2" fill="#f4f4f4"/><path d="M9 10h18v15H9z" fill="#b0b0b0"/></svg></button>
      <button class="relative w-[66px] flex justify-center" aria-label="Snipping Tool"><svg class="size-9" viewBox="0 0 36 36"><rect width="27" height="27" rx="3" fill="#eef0f4"/><path d="M3 5h15M5 6v15" stroke="#d83b01" stroke-width="4" stroke-dasharray="4 2" fill="none"/><path d="M20 8v17M12 20h18" stroke="#8a8f96" stroke-width="4"/><circle cx="32" cy="19" r="3" fill="none" stroke="#1aa0e8" stroke-width="2.500"/><circle cx="20" cy="32" r="3" fill="none" stroke="#1aa0e8" stroke-width="2.500"/></svg><span class="absolute top-[42px] w-[18px] h-[5px] rounded-full bg-[#727e84]"></span></button>
      <button class="relative w-[66px] flex justify-center" aria-label="Teams"><svg class="size-10" viewBox="0 0 40 40"><circle cx="21" cy="8" r="6" fill="#7b83eb"/><rect x="22" y="15" width="16" height="17" rx="5" fill="#5059c9"/><path d="M10 15h20v13q0 10-10 10T10 28z" fill="#7b83eb"/><rect x="1" y="11" width="19" height="20" rx="2" fill="#4b53bc"/><path d="M6 16h9M10.500 16v11" stroke="#fff" stroke-width="2.500"/><circle cx="32" cy="8" r="7.500" fill="#fff" stroke="#888"/><circle cx="32" cy="8" r="6" fill="#6bb700"/><path d="M29 8l2 2 4-4" fill="none" stroke="#fff" stroke-width="2"/></svg><span class="absolute top-[43px] w-[9px] h-[5px] rounded-full bg-[#727e84]"></span></button>
      <button class="w-[66px] flex justify-center" aria-label="Teams personal"><svg class="size-9" viewBox="0 0 36 36"><circle cx="20" cy="6" r="5" fill="#7b83eb"/><circle cx="30" cy="8" r="4" fill="#5059c9"/><rect x="22" y="13" width="14" height="17" rx="5" fill="#5059c9"/><path d="M10 13h18v13q0 9-9 9t-9-9z" fill="#7b83eb"/><rect y="9" width="18" height="19" rx="2" fill="#fff"/><path d="M5 14h8M9 14v10" stroke="#5059c9" stroke-width="2.500"/></svg></button>
      <button class="w-[66px] flex justify-center" aria-label="Store"><svg class="size-9" viewBox="0 0 36 36"><path d="M10 7V1h16v6" fill="none" stroke="#2ab4f0" stroke-width="2.500"/><path d="M0 5h36v25q0 5-5 5H5q-5 0-5-5z" fill="#14508f"/><path d="M10 12h7v7h-7z" fill="#f25022"/><path d="M18 12h7v7h-7z" fill="#7fba00"/><path d="M10 20h7v7h-7z" fill="#00a4ef"/><path d="M18 20h7v7h-7z" fill="#ffb900"/></svg></button>
      <button class="relative w-[66px] flex justify-center" aria-label="Edge"><svg class="size-9" viewBox="0 0 36 36"><defs><linearGradient id="edg"><stop offset="0" stop-color="#1c9be0"/><stop offset="1" stop-color="#5ddb6e"/></linearGradient></defs><circle cx="18" cy="18" r="18" fill="#0c59a4"/><path d="M0 17A18 18 0 0 1 36 17q0 8-9 8-6 0-5-4 2-7-6-8-9 0-16 4z" fill="url(#edg)"/><path d="M15 15q-2 11 8 14 7 1 13-4v-3q-4 4-9 3-8-1-5-6-2-5-7-4z" fill="#cfe8ee"/><rect y="24" width="19" height="12" rx="1" fill="#c87808"/><path d="M0 24h19v5H0z" fill="#f0a020"/><path d="M6 24v-3h7v3" fill="none" stroke="#8a4c00" stroke-width="2"/></svg><span class="absolute top-[41px] w-[9px] h-[5px] rounded-full bg-[#727e84]"></span></button>
      <button class="w-[66px] flex justify-center" aria-label="L"><svg class="size-9" viewBox="0 0 36 36"><path d="M0 0h36v36H0z" fill="#e3120b"/><path d="M9 29l2-22v22z" fill="#7c0a05"/><path d="M13 7v20h12" fill="none" stroke="#fff" stroke-width="5"/></svg></button>
      <button class="relative w-[66px] flex justify-center" aria-label="File Explorer"><svg class="size-9" viewBox="0 0 36 36"><path d="M0 4q0-2 2-2h11l4 4h17q2 0 2 2v10H0z" fill="#dba000"/><rect y="7" width="36" height="27" rx="2" fill="#ffcf48"/><path d="M6 34v-8q0-3 3-3h18q3 0 3 3v8z" fill="#1374cc"/><path d="M10 28h16" stroke="#0a4a90" stroke-width="2"/></svg><span class="absolute top-[41px] w-[9px] h-[5px] rounded-full bg-[#727e84]"></span></button>
      <button class="w-[66px] flex justify-center" aria-label="YouTube"><svg class="size-9" viewBox="0 0 36 36"><rect y="5" width="36" height="26" rx="7" fill="#f00"/><path d="M14 12l10 6-10 6z" fill="#fff"/></svg></button>
      <button class="w-[66px] flex justify-center" aria-label="To Do"><svg class="size-9" viewBox="0 0 36 36"><path d="M0 18l6-6 8 8v12z" fill="#185abd"/><path d="M14 32l-6-6L30 4l6 6z" fill="#41a5ee"/></svg></button>
      <button class="relative w-[66px] flex justify-center" aria-label="Paint"><svg class="size-9" viewBox="0 0 36 36"><path d="M18 1Q36 2 34 18q-2 16-18 17-5 0-5-5t-5-5q-6-2-4-10Q6 2 18 1z" fill="#28a8e4"/><circle cx="11" cy="12" r="3.500" fill="#2e9e38"/><circle cx="19" cy="8" r="3.500" fill="#f8c020"/><circle cx="7" cy="20" r="3.500" fill="#e05020"/><path d="M28 16v18" stroke="#a05c20" stroke-width="4"/><path d="M25 17q0-5 3-7 3 2 3 7z" fill="#e8d8c0"/></svg><span class="absolute top-[41px] w-[9px] h-[5px] rounded-full bg-[#727e84]"></span></button>
      <button class="relative w-[66px] flex justify-center" aria-label="Terminal"><svg class="size-9" viewBox="0 0 36 36"><rect y="4" width="36" height="27" rx="2" fill="#3a3a3a"/><path d="M0 9V6q0-2 2-2h32q2 0 2 2v3z" fill="#9a9a9a"/><path d="M5 14l6 5-6 6" fill="none" stroke="#ddd" stroke-width="3.500"/><path d="M17 25h12" stroke="#fff" stroke-width="4"/></svg><span class="absolute top-[41px] w-[9px] h-[5px] rounded-full bg-[#727e84]"></span></button>
      <button class="relative w-[66px] flex justify-center" aria-label="Visual Studio Code"><svg class="size-9" viewBox="0 0 36 36"><path d="M26 1v9L4 28l-3-3q-1-1 0-2z" fill="#0078c8"/><path d="M26 35v-9L4 8l-3 3q-1 1 0 2z" fill="#1080d0"/><path d="M26 1l9 4v26l-9 4z" fill="#28a8f0"/></svg><span class="absolute top-[41px] w-[9px] h-[5px] rounded-full bg-[#727e84]"></span></button>
    </div>
    <div class="ml-auto flex items-center text-[17px]">
      <svg class="size-4" viewBox="0 0 16 16" fill="none" stroke="#111" stroke-width="1.800"><path d="M1 12l7-8 7 8"/></svg>
      <svg class="ml-7 size-[26px]" viewBox="0 0 26 26" fill="none" stroke="#222" stroke-width="1.700"><path d="M2 13A11 11 0 0 1 23 8M24 2v7h-7M14 24A10 10 0 0 1 3 17M2 24v-7h6"/><circle cx="19" cy="19" r="6.500" fill="#ff9800" stroke="none"/></svg>
      <p class="ml-6 w-10 text-center leading-[23px]">ENG<br>US</p>
      <svg class="ml-[25px] size-6" viewBox="0 0 24 24" fill="none" stroke="#111" stroke-width="1.700"><path d="M1 9q11-10 22 0M4.500 13q7.500-7 15 0M8 16.500q4-4 8 0"/><circle cx="12" cy="20" r="2" fill="#111" stroke="none"/></svg>
      <svg class="ml-3 size-6" viewBox="0 0 24 24" fill="none" stroke="#111" stroke-width="1.500"><path d="M1 9h4l6-6v18l-6-6H1zM14 9q2 3 0 6M17 6q4 6 0 12M20 3q6 9 0 18"/></svg>
      <svg class="ml-3 size-6" viewBox="0 0 24 24" fill="none" stroke="#111" stroke-width="1.600"><rect x="2" y="6" width="20" height="15" rx="3"/><path d="M5 9h14v9H5zM22 11h2v5h-2z" fill="#111" stroke="none"/><path d="M6 0L0 9h4l-2 7 8-9H6z" fill="#111" stroke="#cfe8ee" stroke-width="1"/></svg>
      <p class="ml-4 mb-0.5 w-[102px] text-right leading-6 text-lg">12:27<br>22-03-2024</p>
      <svg class="ml-3 mr-[29px] size-6 fill-[#063f9c]" viewBox="0 0 24 24"><path d="M12 0q7 0 7 8v6l3 4v1H2v-1l3-4V8q0-8 7-8zM9 20h6q-1 4-3 4t-3-4z"/></svg>
    </div>
  </footer>
</body>
</html>
